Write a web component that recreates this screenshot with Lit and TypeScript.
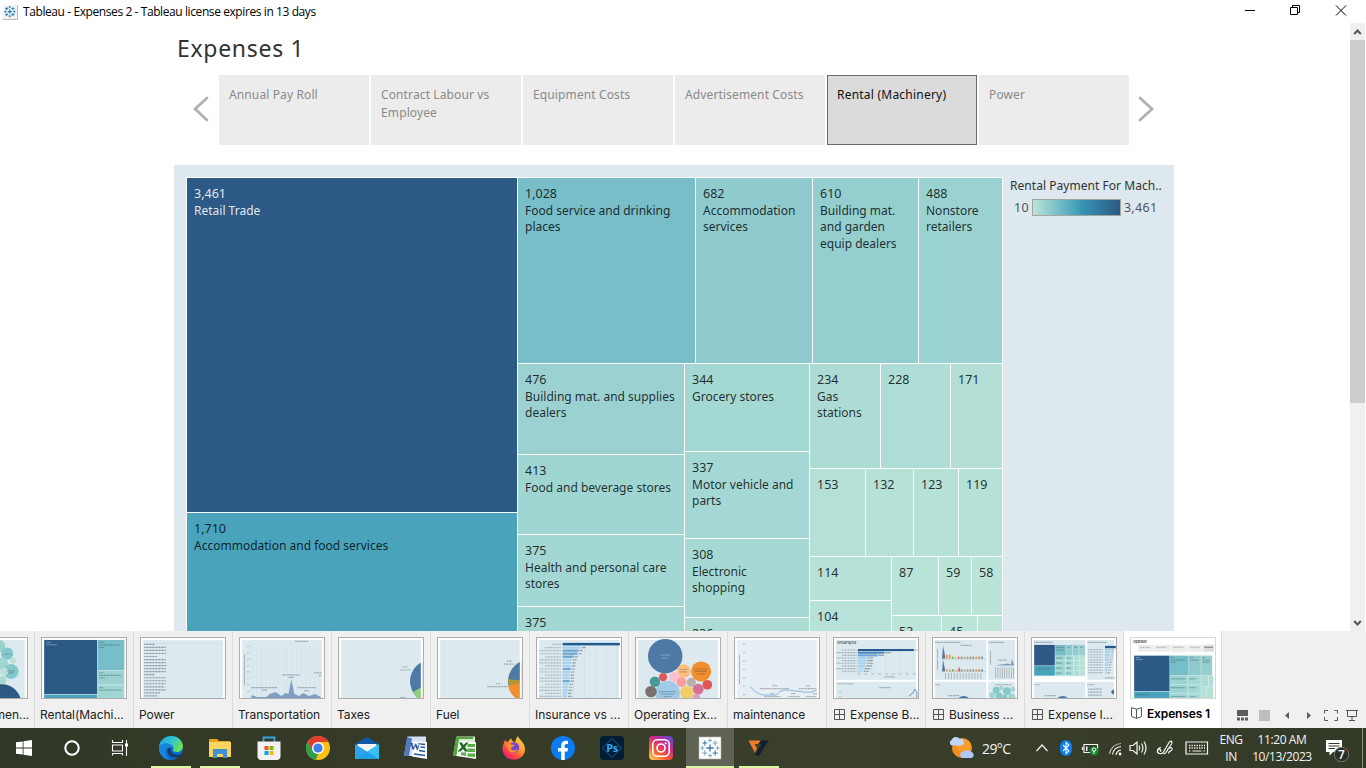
import { LitElement, html, css, svg, nothing } from "lit";
import { customElement } from "lit/decorators.js";
import { styleMap } from "lit/directives/style-map.js";

type Node = {
  size?: number;
  dir?: "row" | "col";
  kids?: Node[];
  value?: string;
  label?: string;
  color?: string;
  light?: boolean;
};

const leaf = (size: number | undefined, value: string, color: string, label = ""): Node => ({ size, value, color, label });

// Every size is the extent of the node along its parent's direction.
const tree: Node = {
  dir: "row",
  kids: [
    {
      size: 330,
      dir: "col",
      kids: [
        { size: 334, value: "3,461", label: "Retail Trade", color: "#2c5985", light: true },
        leaf(undefined, "1,710", "#49a4bb", "Accommodation and food services"),
      ],
    },
    {
      dir: "col",
      kids: [
        {
          size: 185,
          dir: "row",
          kids: [
            leaf(177, "1,028", "#78bec8", "Food service and drinking\nplaces"),
            leaf(116, "682", "#8fcbce", "Accommodation\nservices"),
            leaf(105, "610", "#94cecf", "Building mat.\nand garden\nequip dealers"),
            leaf(undefined, "488", "#9ad2d1", "Nonstore\nretailers"),
          ],
        },
        {
          dir: "row",
          kids: [
            {
              size: 166,
              dir: "col",
              kids: [
                leaf(90, "476", "#9bd2d1", "Building mat. and supplies\ndealers"),
                leaf(79, "413", "#a0d6d2", "Food and beverage stores"),
                leaf(71, "375", "#a2d7d3", "Health and personal care\nstores"),
                leaf(undefined, "375", "#a2d7d3"),
              ],
            },
            {
              size: 124,
              dir: "col",
              kids: [
                leaf(87, "344", "#a4d8d3", "Grocery stores"),
                leaf(86, "337", "#a5d8d4", "Motor vehicle and\nparts"),
                leaf(78, "308", "#a7d9d4", "Electronic\nshopping"),
                leaf(undefined, "236", "#addcd5"),
              ],
            },
            {
              dir: "col",
              kids: [
                {
                  size: 104,
                  dir: "row",
                  kids: [
                    leaf(70, "234", "#addcd5", "Gas\nstations"),
                    leaf(69, "228", "#aedcd6"),
                    leaf(undefined, "171", "#b3dfd7"),
                  ],
                },
                {
                  size: 87,
                  dir: "row",
                  kids: [
                    leaf(55, "153", "#b4e0d7"),
                    leaf(47, "132", "#b5e1d7"),
                    leaf(44, "123", "#b5e1d7"),
                    leaf(undefined, "119", "#b6e1d7"),
                  ],
                },
                {
                  dir: "row",
                  kids: [
                    {
                      size: 81,
                      dir: "col",
                      kids: [leaf(43, "114", "#b6e1d7"), leaf(undefined, "104", "#b7e2d7")],
                    },
                    {
                      dir: "col",
                      kids: [
                        {
                          size: 58,
                          dir: "row",
                          kids: [
                            leaf(46, "87", "#b8e3d8"),
                            leaf(32, "59", "#bae4d8"),
                            leaf(undefined, "58", "#bae4d8"),
                          ],
                        },
                        {
                          dir: "row",
                          kids: [
                            leaf(49, "53", "#bbe5d8"),
                            leaf(35, "45", "#bbe5d8"),
                            leaf(undefined, "", "#bce5d8"),
                          ],
                        },
                      ],
                    },
                  ],
                },
              ],
            },
          ],
        },
      ],
    },
  ],
};

@customElement("tree-map")
class TreeMap extends LitElement {
  static styles = css`
    :host { display: flex; background: #fff; padding: 1px 1px 0; box-sizing: border-box; overflow: hidden; }
    .node { display: flex; gap: 1px; flex: 1 1 0; min-width: 0; min-height: 0; }
    .row { flex-direction: row; }
    .col { flex-direction: column; }
    .fixed { flex: 0 0 auto; }
    .cell {
      display: block; box-sizing: border-box; padding: 7px 0 0 7px; overflow: hidden; white-space: pre;
      font: 12.5px/17px "Noto Sans", "Open Sans", sans-serif; color: rgba(0, 0, 0, 0.8);
    }
    .light { color: rgba(255, 255, 255, 0.88); }
    .label { font-size: 12px; line-height: 16.4px; letter-spacing: 0; padding-top: 1px; }
  `;
  private draw(n: Node, parent: "row" | "col"): unknown {
    const size = n.size === undefined ? {} : parent === "row" ? { width: `${n.size}px` } : { height: `${n.size}px` };
    const fixed = n.size === undefined ? "" : "fixed";
    if (n.kids) {
      return html`<div class="node ${n.dir} ${fixed}" style=${styleMap(size)}>${n.kids.map((k) => this.draw(k, n.dir!))}</div>`;
    }
    return html`<div class="node cell ${fixed} ${n.light ? "light" : ""}" style=${styleMap({ ...size, background: n.color! })}><div>${n.value}</div>${n.label ? html`<div class="label">${n.label}</div>` : nothing}</div>`;
  }
  render() {
    return this.draw(tree, "row");
  }
}

const rect = (x: number, y: number, w: number, h: number, fill: string) =>
  svg`<rect x=${x} y=${y} width=${w} height=${h} fill=${fill} />`;
// A run of lettering too small to read, drawn as a thin dotted stroke.
const dash = (x: number, y: number, w: number, o = 0.5) =>
  svg`<path d="M${x} ${y + 0.5}H${x + w}" stroke="#33454f" stroke-width="1.2" stroke-dasharray="1.3 .5 .8 .4" opacity=${o * 0.85} />`;
const circ = (x: number, y: number, r: number, fill: string) => svg`<circle cx=${x} cy=${y} r=${r} fill=${fill} />`;
const frame = (fill = "#dce9ef") => svg`<rect width="85" height="61" fill="#fff" />${rect(2, 2, 81, 59, fill)}`;
const seq = (n: number) => Array.from({ length: n }, (_, i) => i);

const thumbs: Record<string, unknown> = {
  bubbles: svg`${frame()}${[
    [57, 8, 6, "#9bd2c8"], [65, 16, 6.3, "#83c8cb"], [60, 26, 6, "#a0d6d2"], [69, 34, 7.6, "#83c8cb"],
    [71, 23, 3, "#b7e2d7"], [60, 43, 4, "#a8dad0"], [62, 34, 4, "#b7e2d7"], [60, 66, 19, "#2c5985"],
  ].map((c) => circ(c[0] as number, c[1] as number, c[2] as number, c[3] as string))}${dash(62, 16, 7)}${dash(65, 33, 8)}${dash(66, 35, 6)}`,
  rental: svg`${frame()}${rect(2, 2, 81, 59, "#fff")}${rect(2, 2, 54, 55, "#2c5985")}${rect(2, 57.5, 54, 4, "#49a4bb")}${rect(56.5, 2, 27, 31, "#78bec8")}${rect(56.5, 33.5, 27, 14, "#9bd2d1")}${rect(56.5, 48, 27, 13, "#a0d6d2")}
    <g opacity="0.6">${rect(4, 4, 5, 0.8, "#b9cbdc")}${rect(4, 6.500, 11, 0.8, "#b9cbdc")}</g>${dash(58, 4, 5)}${dash(58, 6.5, 21)}${dash(58, 9, 5)}${dash(58, 35, 4)}${dash(58, 37.5, 22)}${dash(58, 40, 6)}${dash(58, 50, 4)}${dash(58, 52.5, 22)}`,
  power: svg`${frame()}${rect(2, 5, 81, 0.5, "#cbdbe2")}${[11, 22, 22, 22, 13, 22, 22, 23, 22, 22, 11, 22, 22, 22, 21, 22, 16, 13].map((w, i) => dash(3, 6 + i * 3.08, w, 0.6))}`,
  transport: svg`${frame()}${seq(16).map((i) => rect(12 + i * 4.5, 6, 0.5, 54, "#cfe0ea"))}${seq(8).map((i) => dash(7, 8 + i * 6.5, 3, 0.3))}
    ${rect(4, 16, 0.8, 32, "#98a5ac")}${dash(56, 3, 13)}
    <path d="M11 61 L12 58 L17 60 H27 L30 57 L36 55 L42 59 L46 56 L49 57 L52 42 L55 57 L60 59 L64 56 L70 59 L76 57 L82 60 V61 Z" fill="#7f9fc0" />
    ${dash(43, 37, 18)}${dash(49, 39.5, 6)}${dash(11, 50, 27)}${dash(22, 52.5, 6)}${dash(58, 50, 19)}${dash(65, 53, 5)}${dash(75, 35, 8)}${dash(80, 38, 3)}`,
  taxes: svg`${frame()}${circ(94, 44, 22, "#4e79a7")}<path d="M94 44 L75 55 A22 22 0 0 0 94 66 Z" fill="#8cd17d" /><path d="M94 44 L82 61 H94 Z" fill="#f28e2b" />${rect(83, 0, 2, 61, "#fff")}${dash(64, 29, 6)}${dash(62, 32, 11)}${dash(62, 60, 6)}`,
  fuel: svg`${frame()}${circ(93, 44, 22, "#4e79a7")}<path d="M93 44 L71 42 L72 48 Z" fill="#b6992d" /><path d="M93 44 L71 48 A22 22 0 0 0 93 66 Z" fill="#f28e2b" />${rect(83, 0, 2, 61, "#fff")}${dash(70, 23, 5)}${dash(67, 26, 10)}${dash(59, 46, 4)}${dash(50, 49, 21)}`,
  insurance: svg`${frame()}${seq(6).map((i) => rect(26 + i * 11, 5, 0.5, 56, "#cbdce6"))}${rect(26, 5, 58, 2.5, "#1f5a8d")}
    ${[19, 16, 15, 11, 9.5, 9, 8.5, 8, 7.5, 7, 7, 7, 6, 5.5, 5, 4.5, 4.5].map((w, i) => svg`${rect(26, 8.6 + i * 3.1, w, 2.3, [1, 2, 3, 7, 11].includes(i) ? "#6fa8d3" : "#a5d2ee")}${dash(27 + w, 9.3 + i * 3.1, 3.5, 0.7)}${dash(i % 3 ? 2 : 8, 9.3 + i * 3.1, i % 3 ? 22 : 16, 0.35)}`)}${dash(15, 6, 10, 0.35)}`,
  operating: svg`${frame()}${[
    [29.5, 18.5, 17.5, "#4e79a7"], [66, 34, 10.2, "#f28e2b"], [48.5, 33.5, 6.8, "#ffbe7d"], [32, 56, 12.5, "#a0cbe8"],
    [19, 44.5, 5.3, "#499894"], [27.3, 39.8, 4.2, "#e15759"], [38.5, 39.5, 5.2, "#fabfd2"], [46, 45, 5, "#ff9d9a"],
    [56, 45, 4.6, "#bab0ac"], [72.3, 47.5, 4.9, "#e15759"], [63, 52, 5.6, "#d37295"], [15, 54.5, 5.8, "#79706e"],
    [51.5, 55.5, 6.8, "#f1ce63"], [61, 61, 4, "#d7a0bd"],
  ].map((c) => circ(c[0] as number, c[1] as number, c[2] as number, c[3] as string))}<g opacity="0.7">${rect(24, 17, 11, 0.8, "#a9bfd6")}${rect(26, 20, 7, 0.8, "#a9bfd6")}</g>${dash(44, 31.5, 8)}${dash(44, 34, 8)}${dash(59, 31, 14)}${dash(60, 33.5, 12)}${dash(62, 36, 8)}${dash(23, 54, 18)}${dash(25, 56.5, 14)}${dash(28, 59, 8)}`,
  maintenance: svg`${frame("#e6eff4")}${seq(7).map((i) => dash(8, 6 + i * 8.5, 3, 0.35))}${rect(4, 17, 0.8, 30, "#98a5ac")}
    <path d="M15 49 Q20 56 28 58 H42 Q46 52 54 53 T70 55 T83 53" fill="none" stroke="#86b6dc" stroke-width="1" />${dash(38, 48, 5)}${dash(25, 51, 30)}${dash(72, 48, 4)}${dash(65, 51, 18)}${dash(30, 59, 16)}${dash(36, 56, 4)}${dash(54, 59, 12)}${dash(57, 56, 4)}${dash(72, 59, 11)}${dash(79, 56, 4)}`,
  expenseB: svg`${frame()}<text x="2.500" y="6.500" font-size="4" fill="#555" textLength="20">Annual Pay Roll</text>${seq(5).map((i) => rect(24 + i * 14, 10, 0.5, 25, "#cbdce6"))}
    ${[[57, "#24598b"], [27, "#4a86bb"], [20, "#6ba3d1"], [9, "#a5d2ee"], [9, "#a5d2ee"], [8.5, "#a5d2ee"], [8, "#a5d2ee"], [6, "#b5daf1"], [5, "#b5daf1"]].map((b, i) => svg`${rect(24, 11.2 + i * 2.7, b[0] as number, 2.1, b[1] as string)}${dash(25 + (b[0] as number), 11.7 + i * 2.7, i ? 6 : 3, 0.7)}${dash(i % 2 ? 2 : 8, 11.7 + i * 2.7, i % 2 ? 21 : 15, 0.4)}`)}
    ${seq(9).map((i) => dash(24 + i * 7, 36, 3, 0.35))}${dash(51, 39, 11)}${rect(0, 42.5, 85, 2, "#fff")}${dash(3, 46, 17)}${dash(46, 50, 12)}${dash(5, 54, 3, 0.3)}${dash(5, 59, 3, 0.3)}<path d="M76 59 L80 56 L82 52 L84 55 V61" fill="none" stroke="#6c93b8" />`,
  business: svg`${frame()}${dash(2, 4, 26)}${dash(56, 4, 16)}${dash(28, 7, 11)}${rect(54, 0, 2, 61, "#fff")}${rect(0, 42.5, 85, 2, "#fff")}
    <path d="M9 21 L10 8 L12 18 V21 Z M9 34 L10 22 L12 32 V34 Z" fill="#4e79a7" />
    ${["#f28e2b", "#f28e2b", "#59a14f", "#edc948", "#e15759", "#499894", "#f28e2b", "#b07aa1", "#59a14f", "#9c755f", "#f28e2b", "#e15759", "#4e79a7"].map((c, i) => svg`${rect(13 + i * 3, 19 - (i < 2 ? 2 : 0), 1.6, i < 2 ? 4 : 2, c)}${rect(13 + i * 3, 32, 1.6, 2, c)}${rect(12 + i * 3, 35.5, 0.8, 6.5, "#a2adb3")}`)}
    ${rect(26, 30, 1.2, 4, "#e15759")}${rect(8, 21.2, 46, 0.5, "#aebbc2")}${rect(8, 34, 46, 0.5, "#aebbc2")}${rect(4, 11, 0.8, 10, "#9aa5ab")}${rect(4, 22, 0.8, 10, "#9aa5ab")}
    <path d="M62 28 L76 26 L79 27 L80 21 L82 27 V28 Z" fill="#7f9fc0" />${dash(66, 22, 9)}${seq(9).map((i) => rect(63 + i * 2.3, 30, 0.8, 11, "#a2adb3"))}${rect(58, 13, 0.8, 14, "#9aa5ab")}
    ${dash(2, 47, 5)}${dash(63, 47, 17)}${circ(31, 67, 8, "#4e79a7")}${dash(15, 58, 12)}
    ${[[64, 53, 3.5], [69, 51, 2.5], [75, 54, 4], [60, 58, 3], [67, 59, 3.5], [80, 60, 3.6], [73, 60, 2.5], [81, 52, 2.5]].map((c, i) => circ(c[0], c[1], c[2], i % 2 ? "#a0d6d2" : "#83c8c8"))}`,
  expenseI: svg`${frame()}${dash(2, 4, 19)}${dash(56, 4, 20)}${rect(2, 7, 52, 32, "#fff")}${rect(2, 7, 21, 21, "#2c5985")}${rect(2, 28.3, 21, 10, "#49a4bb")}
    ${rect(23.3, 7, 11, 11, "#78bec8")}${rect(34.6, 7, 6.5, 11, "#8fcbce")}${rect(41.4, 7, 6, 11, "#94cecf")}${rect(47.7, 7, 6, 11, "#9ad2d1")}${seq(4).map((i) => svg`${rect(23.3, 18.3 + i * 5.1, 10, 4.8, "#9bd4d1")}${rect(33.7, 18.3 + i * 5.1, 8, 4.8, "#a6d8d4")}${rect(42, 18.3 + i * 5.1, 5.5, 4.8, "#b0ddd6")}${rect(47.8, 18.3 + i * 5.1, 5.9, 4.8, "#b6e1d7")}${dash(24.5, 20 + i * 5.1, 6)}${dash(35, 20 + i * 5.1, 4)}`)}
    ${dash(24.5, 9, 7)}${dash(24.5, 11.5, 8)}${dash(36, 9, 3)}${dash(43, 9, 3)}${dash(49, 9, 3)}${dash(4, 31, 14)}${rect(0, 39, 54, 5.5, "#fff")}${rect(54, 0, 2, 61, "#fff")}${rect(0, 42.5, 85, 2, "#fff")}
    ${rect(74, 8, 11, 2.4, "#24598b")}${seq(10).map((i) => svg`${rect(74, 11 + i * 2.6, 6 - i * 0.5, 2, "#a5d2ee")}${dash(81 - i * 0.5, 11.3 + i * 2.6, 3)}${dash(57, 11.3 + i * 2.6, 15, 0.4)}`)}${dash(74, 40, 10)}
    ${dash(2, 47, 6)}${dash(56, 47, 7)}${circ(31, 67, 8, "#4e79a7")}${dash(13, 58, 12)}${seq(3).map((i) => dash(57, 51.5 + i * 3, 14))}<path d="M83 52L80 55L83 58Z" fill="#2c5985" />`,
  expenses1: svg`${rect(0, 0, 85, 61, "#fff")}<text x="2" y="5" font-size="4" fill="#333" textLength="14">Expenses 1</text>${seq(4).map((i) => svg`${rect(7 + i * 16.9, 7, 16.2, 7, "#ececec")}${dash(9 + i * 16.9, 9, 10, 0.35)}`)}${rect(74, 7, 10, 7, "#dcdcdc")}${dash(74.5, 9, 9, 0.8)}
    ${rect(3, 17, 80, 44, "#eef5f7")}${rect(3, 18, 36, 36, "#2c5985")}${rect(3, 54.5, 36, 7, "#49a4bb")}${rect(39.4, 18, 19, 20, "#78bec8")}${rect(58.8, 18, 12, 20, "#8fcbce")}${rect(71.2, 18, 11, 20, "#94cecf")}
    ${seq(3).map((i) => svg`${rect(39.4, 38.4 + i * 9, 18, 8.7, "#9bd4d1")}${rect(57.8, 38.4 + i * 9, 13, 8.7, "#a6d8d4")}${dash(40.5, 41 + i * 9, 15)}${dash(59, 41 + i * 9, 7)}`)}${rect(71.2, 38.4, 7, 10.6, "#addcd5")}${rect(78.5, 38.4, 5, 10.6, "#b0ddd6")}${rect(71.2, 49.3, 5.5, 12, "#b4e0d7")}${rect(77, 49.3, 6.5, 12, "#b5e1d7")}
    <g opacity="0.7">${rect(4.5, 19.500, 4, 0.8, "#b9cbdc")}${rect(4.5, 21.500, 7, 0.8, "#b9cbdc")}</g>${dash(40.5, 19.500, 3)}${dash(40.5, 22, 15)}${dash(40.5, 24.200, 5)}${dash(60, 19.500, 3)}${dash(60, 22, 9)}${dash(72.5, 19.500, 3)}${dash(72.5, 22, 8)}${dash(72.5, 24.200, 7)}${dash(4.5, 57, 14)}`,
};

const tabs: [string, string, string?][] = [
  ["bubbles", "Advertisemen..."],
  ["rental", "Rental(Machi..."],
  ["power", "Power"],
  ["transport", "Transportation"],
  ["taxes", "Taxes"],
  ["fuel", "Fuel"],
  ["insurance", "Insurance vs ..."],
  ["operating", "Operating Ex..."],
  ["maintenance", "maintenance"],
  ["expenseB", "Expense B...", "grid"],
  ["business", "Business ...", "grid"],
  ["expenseI", "Expense I...", "grid"],
];

const gridIcon = html`<svg width="11" height="11" viewBox="0 0 11 11" fill="none" stroke="#555"><path d="M.5 .5H10.5V10.5H.5Z M5.5 .5V10.5 M.5 5.5H10.5" /></svg>`;
const storyIcon = html`<svg width="11" height="12" viewBox="0 0 11 12" fill="none" stroke="#555"><path d="M5.5 2.2L.5 .7V9.6L5.5 11.3L10.5 9.6V.7L5.5 2.2V11.3" /></svg>`;

@customElement("sheet-strip")
class SheetStrip extends LitElement {
  static styles = css`
    :host { display: flex; background: #f0f0f0; overflow: hidden; height: 97px; font-family: Inter, "Open Sans", sans-serif; }
    .tab { flex: 0 0 99px; box-sizing: border-box; border-right: 1px solid #dcdcdc; padding: 6px 0 0 6px; overflow: hidden; }
    .first { margin-left: -64px; }
    .active { background: #fff; flex-basis: 98px; }
    .thumb { display: block; width: 84px; height: 60px; border: 1px solid #adadad; overflow: hidden; }
    .active .thumb { border-color: #d8d8d8; }
    .label { display: flex; align-items: center; gap: 5px; height: 18px; margin-top: 6px; margin-left: -1px; white-space: nowrap; font-size: 12px; letter-spacing: -0.05px; color: #222; }
    .active .label { font-weight: 600; color: #000; margin-top: 5px; margin-left: 1px; letter-spacing: -0.15px; }
    .iconed { padding-left: 2px; }
    .label svg { flex: none; }
    .tools { display: flex; margin: 77px 0 0 15px; height: 14px; }
  `;
  render() {
    return html`
      ${tabs.map(([id, label, icon], i) => html`<div class="tab ${i ? "" : "first"}">
        <svg class="thumb" viewBox="0 0 85 61">${thumbs[id]}</svg>
        <div class="label ${icon ? "iconed" : ""}">${icon ? gridIcon : nothing}<span>${label}</span></div>
      </div>`)}
      <div class="tab active">
        <svg class="thumb" viewBox="0 0 85 61">${thumbs.expenses1}</svg>
        <div class="label">${storyIcon}<span>Expenses 1</span></div>
      </div>
      <svg class="tools" width="124" height="14" viewBox="0 0 124 14">
        <path fill="#5c5c5c" d="M0 2H11V8H0Z M0 9.5H3V12.5H0Z M4 9.5H7V12.5H4Z M8 9.5H11V12.5H8Z" />
        <path fill="#bdbdbd" d="M22 2H33V13H22Z" />
        <path fill="#5c5c5c" d="M52 4V11L48 7.5Z M70 4V11L74 7.5Z" />
        <path fill="none" stroke="#555" d="M87.500 5.500V2.500H91 M97.500 2.500H100.500V5.500 M87.500 9V12.500H91 M97.500 12.500H100.500V9" />
        <path fill="none" stroke="#555" d="M109 2.500H121 M110.500 2.500V8.500H119.500V2.500 M115 8.500V12 M112 12.500H118" />
      </svg>
    `;
  }
}

const plus = (x: number, y: number, r: number, w: number, c: string) =>
  svg`<path d="M${x - r} ${y}H${x + r}M${x} ${y - r}V${y + r}" stroke=${c} stroke-width=${w} fill="none" />`;
const tableau = (c1: string, c2: string, k = 1) => svg`
  ${plus(11, 11, 3.6, 1.3 * k, c1)}${plus(11, 3.4, 2, k, c2)}${plus(11, 18.6, 2, k, c2)}${plus(3.4, 11, 2, k, c2)}${plus(18.6, 11, 2, k, c2)}
  ${plus(5.8, 6, 2.5, 1.1 * k, c1)}${plus(16.2, 6, 2.5, 1.1 * k, c2)}${plus(5.8, 16, 2.5, 1.1 * k, c2)}${plus(16.2, 16, 2.5, 1.1 * k, c1)}`;

const apps: { id: string; state?: string; icon: unknown }[] = [
  { id: "start", icon: svg`<path fill="#fff" d="M4 6.300L10.700 5.400V11.500H4Z M11.500 5.300L20 4V11.500H11.500Z M4 12.400H10.700V18.600L4 17.700Z M11.500 12.400H20V20L11.500 18.800Z" />` },
  { id: "search", icon: svg`<circle cx="12" cy="12" r="6.700" fill="none" stroke="#fff" stroke-width="2" />` },
  { id: "tasks", icon: svg`<path fill="none" stroke="#fff" stroke-width="1.100" d="M4.500 4V6.500H14.500V4 M4.500 19.500V17.500H14.500V19.500 M4.500 9H14.500V15H4.500Z M18.500 4V20" /><path fill="#fff" d="M17 7.500H20V10.500H17Z" />` },
  {
    id: "edge", state: "open",
    icon: svg`<defs><linearGradient id="eg" x1="0" y1="0" x2="1" y2="0.4"><stop offset="0" stop-color="#1aa4e0" /><stop offset=".6" stop-color="#35c4d0" /><stop offset="1" stop-color="#68e05a" /></linearGradient></defs>
      <circle cx="12" cy="12" r="12" fill="#0d6cc6" /><path d="M16 23.300L24.500 17V24.500H15Z" fill="#343a29" /><path d="M0 11C1 4 6 0 12 0C19 0 24 5 24 10.500C24 14 21 16 18 16C15 16 13.800 15 13.800 14C15 13 15 8.500 10 8.500C5 8.500 1 9 0 11Z" fill="url(#eg)" />
      <path d="M8.500 13C7.500 18 11 22 17 21.500C20 21 21.800 19.500 22.500 18C19 19.500 11 19 12 12C9.500 10 8.500 12 8.500 13Z" fill="#123e78" /><path d="M0 12C0 9 4 6.500 8 7.300C12 7.800 14 10 13 12.500C11 10 6 12 6.500 17C7 20 8.500 22.500 11 24C4 23.500 0 18 0 12Z" fill="#1687da" />`,
  },
  { id: "files", state: "open", icon: svg`<path d="M1 3H9L11 5H22V21H1Z" fill="#e9a716" /><path d="M1 6H23V21H1Z" fill="#fcd462" /><path d="M5 13H19V22H15V18H9V22H5Z" fill="#3f92d6" />` },
  { id: "store", icon: svg`<path d="M6.500 7V1.500H17.500V7" fill="none" stroke="#35a6df" stroke-width="1.800" /><path d="M.5 5.500H23.500V20A3.500 3.500 0 0 1 20 24H4A3.500 3.500 0 0 1 .5 20Z" fill="#f1f1f1" /><path d="M7.500 10H11.500V14H7.500Z" fill="#f25022" /><path d="M12.500 10H16.500V14H12.500Z" fill="#7fba00" /><path d="M7.500 15H11.500V19H7.500Z" fill="#00a4ef" /><path d="M12.500 15H16.500V19H12.500Z" fill="#ffb900" />` },
  { id: "chrome", icon: svg`<circle cx="12" cy="12" r="12" fill="#fbc117" /><path d="M1.600 6A12 12 0 0 1 22.400 6H12L6.800 15Z" fill="#e33b2e" /><path d="M1.600 6L6.800 15L12 18L10 23.800A12 12 0 0 1 1.600 6Z" fill="#2da04b" /><circle cx="12" cy="12" r="6" fill="#fff" /><circle cx="12" cy="12" r="4.600" fill="#3f7ee8" />` },
  { id: "mail", icon: svg`<path d="M0 8L12 1L24 8V12H0Z" fill="#0c59a4" /><path d="M2.500 8H21.500V14L12 19L2.500 14Z" fill="#f3f3f3" /><path d="M0 8L24 23H0Z" fill="#2ea3ec" /><path d="M24 8V23H0Z" fill="#35c1f1" /><path d="M2.500 8H21.500L12 15.500Z" fill="#f3f3f3" /><path d="M12 15.500L24 23H0Z" fill="#22a0e6" />` },
  { id: "word", icon: svg`<path d="M3.500 .5H22V20H0Z" fill="#d5e1f2" /><path d="M3 1L8 2.500L5 20H0Z" fill="#4f79c2" /><path d="M9 5L23 6V23L8 20.500Z" fill="#f8fbff" /><path d="M16.500 8L21 8.500 M16.500 11L21 11.500 M15 14.500L21 15.500 M10 18L21 19.500" stroke="#2b57a5" stroke-width="1.300" /><text x="5.500" y="14" font-size="11" font-weight="700" font-family="Liberation Serif,serif" fill="#264f9c">W</text>` },
  { id: "excel", icon: svg`<path d="M3.500 .5H22V20H0Z" fill="#d4ebcc" /><path d="M3 1H20V3H6L3.500 20H0Z" fill="#57a33c" /><path d="M6 5L23 6V23L3.500 20Z" fill="#f6fcf3" /><path d="M14.500 8H22V11H14.500Z M14.500 12.500H22V16H14.500Z M14.500 17.500H22V21L14.500 20.500Z M8 16.500H13V20L8 19Z" fill="#5fab47" /><path d="M6 6.500H9L10.500 9L13 6.500H15.500L12 11L15 15.500H12L10 13L7.500 15.500H4.500L8.700 11Z" fill="#1e6b24" />` },
  {
    id: "firefox",
    icon: svg`<defs><linearGradient id="ff" x1="1" y1="0" x2=".2" y2="1"><stop offset="0" stop-color="#ffe14a" /><stop offset=".45" stop-color="#ff9a2a" /><stop offset=".8" stop-color="#ff3750" /><stop offset="1" stop-color="#e31587" /></linearGradient></defs>
      <path d="M16 0C17 4 23 6 23 13.500A11.200 10.500 0 0 1 .5 13C.5 9 2 7 3 4C4 5.500 5 6 6 6C7 4 8 3 9.500 2.500C9.500 5 11 6 13 6C14 4 14 2 16 0Z" fill="url(#ff)" /><circle cx="12" cy="11.500" r="5.200" fill="#7547d8" /><path d="M4 9C7 7 10 9 12.500 9C12 11 9 11 9 13C10 15 14 14.500 16 13C15 17 9 18 6.500 14Z" fill="#ff9327" />`,
  },
  { id: "facebook", icon: svg`<circle cx="12" cy="12" r="12" fill="#0d7cf2" /><path fill="#fff" d="M10.200 24V15.500H7V12H10.200V9.500C10.200 6.300 12 4.700 14.800 4.700C16 4.700 17 4.900 17 4.900V8H15.400C14 8 13.700 8.900 13.700 9.700V12H17L16.500 15.500H13.700V24Z" />` },
  { id: "photoshop", icon: svg`<rect width="24" height="24" rx="4" fill="#001d33" /><path d="M12 2.500L21.500 12L12 21.500L2.500 12Z" fill="none" stroke="#1f79b8" stroke-width="0.800" /><text x="6.300" y="16" font-size="11" font-weight="700" font-family="Open Sans,sans-serif" fill="#35a4f5" textLength="12">Ps</text>` },
  {
    id: "instagram",
    icon: svg`<defs><linearGradient id="ig" x1=".1" y1="1" x2=".8" y2="0"><stop offset="0" stop-color="#ffcf55" /><stop offset=".35" stop-color="#f8572f" /><stop offset=".65" stop-color="#d62a85" /><stop offset="1" stop-color="#6a45cf" /></linearGradient></defs>
      <rect width="24" height="24" rx="4" fill="url(#ig)" /><rect x="3.800" y="3.800" width="16.400" height="16.400" rx="4.500" fill="none" stroke="#fff" stroke-width="1.600" /><circle cx="12" cy="12" r="4" fill="none" stroke="#fff" stroke-width="1.700" /><circle cx="16.700" cy="7.300" r="1.100" fill="#fff" />`,
  },
  { id: "tableau", state: "open current", icon: svg`<rect x="1" y="1" width="22" height="22" fill="#fafafa" stroke="#b7b7b0" stroke-width="0.600" /><g transform="translate(1 1)">${tableau("#3f7fa8", "#7fa9c4")}</g>` },
  { id: "seven", state: "open", icon: svg`<path fill="#f07a2c" d="M1.500 4.500H14L11 8H7.500L10 12L8 17Z" /><path fill="#141d33" d="M14 4.500H21.500L12 20L8 18.500L14.500 8H11.500Z" />` },
];

@customElement("task-bar")
class TaskBar extends LitElement {
  static styles = css`
    :host { display: flex; height: 40px; background: linear-gradient(90deg, #313726, #3a3f2b 60%, #323a27); font-family: "Open Sans", sans-serif; color: #f4f4f4; }
    .app { width: 49px; flex: none; display: flex; flex-direction: column; padding-top: 8px; box-sizing: border-box; justify-content: space-between; }
    .app svg { margin-left: 12px; }
    .start, .search, .tasks { width: 48px; }
    .edge-app { margin-left: 3px; }
    .bar { width: 40px; height: 2px; margin-left: 4px; background: #dcf7a4; }
    .current { background: #5f6354; width: 48px; margin-right: 1px; }
    .current .bar { width: 48px; margin-left: 0; }
    .current svg { margin-left: 11.5px; }
    .idle .bar { visibility: hidden; }
    .tray { display: flex; align-items: center; margin-left: auto; }
    .temp { font-size: 14px; width: 53px; letter-spacing: -0.6px; margin-right: -1px; }
    .icons { display: block; margin-right: 1px; }
    .lang, .time { font-size: 12px; line-height: 17px; white-space: nowrap; display: flex; flex-direction: column; align-items: center; padding-bottom: 1px; }
    .lang { width: 24px; letter-spacing: -0.4px; margin-left: 9px; }
    .time { width: 70px; letter-spacing: -0.4px; margin-left: 4px; }
    .weather { margin-right: 8px; }
    .note { margin-left: 8px; }
    .peek { width: 1px; height: 40px; background: #8d917f; margin: 0 3px 0 11px; }
  `;
  render() {
    return html`
      ${apps.map((a) => html`<div class="app ${a.id === "edge" ? "edge-app" : a.id} ${a.state ?? "idle"}">
        <svg width="24" height="24" viewBox="0 0 24 24">${a.icon}</svg><div class="bar"></div>
      </div>`)}
      <div class="tray">
        <svg class="weather" width="25" height="24" viewBox="0 0 25 24">
          <circle cx="13" cy="12" r="10" fill="#f48d1f" /><circle cx="15" cy="10" r="7" fill="#f9a42c" opacity=".7" />
          <path d="M3 9.500A3 3 0 0 1 2.500 4A5 5 0 0 1 11 3A3.300 3.300 0 0 1 12.500 9.500Z" fill="#c3d6fa" />
          <path d="M14.500 22A3.200 3.200 0 0 1 14.500 15.500A5 5 0 0 1 22 15.800A3.200 3.200 0 0 1 22.500 22Z" fill="#b0c8f8" />
        </svg>
        <span class="temp">29°C</span>
        <svg class="icons" width="175" height="30" viewBox="0 0 175 30" fill="none" stroke="#f4f4f4" stroke-width="1.200">
          <path d="M2.500 18L8 12L13.500 18" />
          <rect x="26" y="7" width="12" height="16" rx="6" fill="#0a7bf0" stroke="none" /><path d="M29 12L35 18L32 20.500V9.500L35 12L29 18" stroke-width="1.100" />
          <path d="M50 11.500H63.500V19.500H50Z M48.500 14V17" /><path d="M52 13.500H53.500V18H52Z" fill="#f4f4f4" stroke="none" /><circle cx="60" cy="18" r="4.500" fill="#118a2e" stroke="none" /><path d="M60 21V17M58 17A2 2 0 0 1 62 17L60 19Z" stroke="#fff" stroke-width=".9" />
          <g transform="translate(-1 0)"><path d="M76.500 21A12 12 0 0 1 88 10.500" opacity=".7" /><path d="M79.500 21.500A9 9 0 0 1 88 13.500" /><path d="M83 22A6 6 0 0 1 88 17" /><circle cx="87" cy="21" r="1.400" fill="#fff" stroke="none" /></g>
          <g transform="translate(-2 0)"><path d="M98 12.500H101L105 9V21L101 17.500H98Z" /><path d="M107 12.500Q108.500 15 107 17.500 M109.500 10.500Q112.300 15 109.500 19.500 M112 8.500Q116 15 112 21.500" /></g>
          <path d="M127 14.500C122.500 15 122.500 20 125.500 20.500C128 21 129 20.500 129.500 19L135 9.500C136.500 7 139 8.500 137.500 11L131.500 20L129.500 21 M124 17C126 15.500 128 17.500 126 18.500 M133 18C134 14 139 13.500 138 16.500C137 18.500 134.500 18 134.500 20.500" />
          <path d="M152 9H173.500V21H152Z" /><path d="M155 12.500H171 M155 15H171" stroke-dasharray="1.300 1.200" stroke-width="1.300" /><path d="M155 18H156.500M158.500 18H167.500M169.500 18H171" />
        </svg>
        <div class="lang"><span>ENG</span><span>IN</span></div>
        <div class="time"><span>11:20 AM</span><span>10/13/2023</span></div>
        <svg class="note" width="26" height="28" viewBox="0 0 26 28">
          <path d="M1 6H17V18H8L4.500 21.500V18H1Z" fill="#fff" /><path d="M3.500 9.500H14.500M3.500 12H14.500M3.500 14.500H10" stroke="#353b29" stroke-width="1" />
          <circle cx="16.500" cy="20.500" r="7.200" fill="#2b2d28" stroke="#777a70" /><text x="13" y="25" font-size="12" font-family="Open Sans,sans-serif" font-weight="600" fill="#fff">7</text>
        </svg>
        <div class="peek"></div>
      </div>`;
  }
}

const points = [
  "Annual Pay Roll",
  "Contract Labour vs\nEmployee",
  "Equipment Costs",
  "Advertisement Costs",
  "Rental (Machinery)",
  "Power",
];

@customElement("app-root")
class AppRoot extends LitElement {
  static styles = css`
    :host { display: flex; flex-direction: column; width: 1366px; height: 768px; overflow: hidden; background: #fff; font-family: "Noto Sans", "Open Sans", sans-serif; }
    .title { display: flex; height: 23px; align-items: center; box-sizing: border-box; padding-left: 3px; flex: none; }
    .name { font: 12px/16px "Open Sans", sans-serif; letter-spacing: -0.41px; margin-left: 5px; color: #000; white-space: nowrap; }
    .controls { margin-left: auto; }
    .main { flex: 1; min-height: 0; display: flex; }
    .view { flex: 1; padding-left: 174px; overflow: hidden; min-width: 0; }
    h1 { margin: 0; font-weight: 400; font-size: 23px; line-height: 32px; padding: 9px 0 0 3px; color: #333; height: 52px; box-sizing: border-box; letter-spacing: 0.7px; }
    .story { display: flex; height: 70px; align-items: center; width: 1000px; }
    .prev { margin: 0 9px 2px 18px; }
    .next { margin: 0 0 2px 8px; }
    .points { display: flex; gap: 2px; }
    .point { width: 150px; height: 70px; box-sizing: border-box; padding: 10px 9px; border: 1px solid #ececec; background: #ececec; font-size: 12px; line-height: 18px; letter-spacing: 0.12px; color: #8a8a8a; white-space: pre; }
    .on { background: #dbdbdb; border-color: #6b6b6b; color: #111; letter-spacing: 0.22px; }
    .panel { width: 1000px; margin-top: 20px; height: 600px; background: #dde9ef; padding: 12px; box-sizing: border-box; display: flex; }
    tree-map { width: 817px; height: 588px; flex: none; }
    .legend { padding: 2px 0 0 7px; font-size: 12px; color: #333; white-space: nowrap; }
    .head { line-height: 14px; letter-spacing: 0.04px; }
    .scale { display: flex; align-items: center; margin-top: 5px; padding-left: 4px; line-height: 18px; color: #555; font-size: 12.5px; }
    .scale .num { padding-top: 1px; letter-spacing: 0.3px; line-height: 17px; }
    .ramp { width: 87px; height: 15px; border: 1px solid #a5a5a0; margin: 0 3px; background: linear-gradient(90deg, #bce4d8, #49a4bb 48%, #3592b0 58%, #2c5985); }
    .scroll { width: 15px; margin-right: 1px; background: #f0f0f0; display: flex; flex-direction: column; }
    .thumb { height: 363px; background: #cdcdcd; }
    .down { margin-top: auto; }
    .scroll svg { display: block; }
  `;
  render() {
    return html`
      <div class="title">
        <svg width="15" height="16" viewBox="0 0 15 16"><rect width="15" height="15" y="1" fill="#f3f3f3" /><path d="M14.500 1V15.500H0" stroke="#bbb" fill="none" /><g transform="translate(.2 1) scale(.6)">${tableau("#1f79b0", "#2f86ba", 1.5)}</g></svg>
        <span class="name">Tableau - Expenses 2 - Tableau license expires in 13 days</span>
        <svg class="controls" width="121" height="23" viewBox="0 0 121 23" fill="none" stroke="#000"><path d="M0 10.500H10 M45.500 7.500H52.500V14.500H45.500Z M47.500 7V5.500H54.500V12.500H53 M91 5.500L101 15.500M101 5.500L91 15.500" /></svg>
      </div>
      <div class="main">
        <div class="view">
          <h1>Expenses 1</h1>
          <div class="story">
            <svg class="prev" width="18" height="26" viewBox="0 0 18 26"><path d="M15 2L3 13L15 24" fill="none" stroke="#b1b1b1" stroke-width="2.800" stroke-linecap="round" /></svg>
            <div class="points">${points.map((p) => html`<div class="point ${p.startsWith("Rental") ? "on" : ""}">${p}</div>`)}</div>
            <svg class="next" width="18" height="26" viewBox="0 0 18 26"><path d="M3 2L15 13L3 24" fill="none" stroke="#b1b1b1" stroke-width="2.800" stroke-linecap="round" /></svg>
          </div>
          <div class="panel">
            <tree-map></tree-map>
            <div class="legend">
              <div class="head">Rental Payment For Mach..</div>
              <div class="scale"><span class="num">10</span><span class="ramp"></span><span class="num">3,461</span></div>
            </div>
          </div>
        </div>
        <div class="scroll">
          <svg width="15" height="17" viewBox="0 0 15 17"><path d="M4.200 11L7.500 7.500L10.800 11" fill="none" stroke="#555" stroke-width="2" /></svg>
          <div class="thumb"></div>
          <svg class="down" width="15" height="17" viewBox="0 0 15 17"><path d="M4.200 7L7.500 10.500L10.800 7" fill="none" stroke="#555" stroke-width="2" /></svg>
        </div>
      </div>
      <sheet-strip></sheet-strip>
      <task-bar></task-bar>
    `;
  }
}
